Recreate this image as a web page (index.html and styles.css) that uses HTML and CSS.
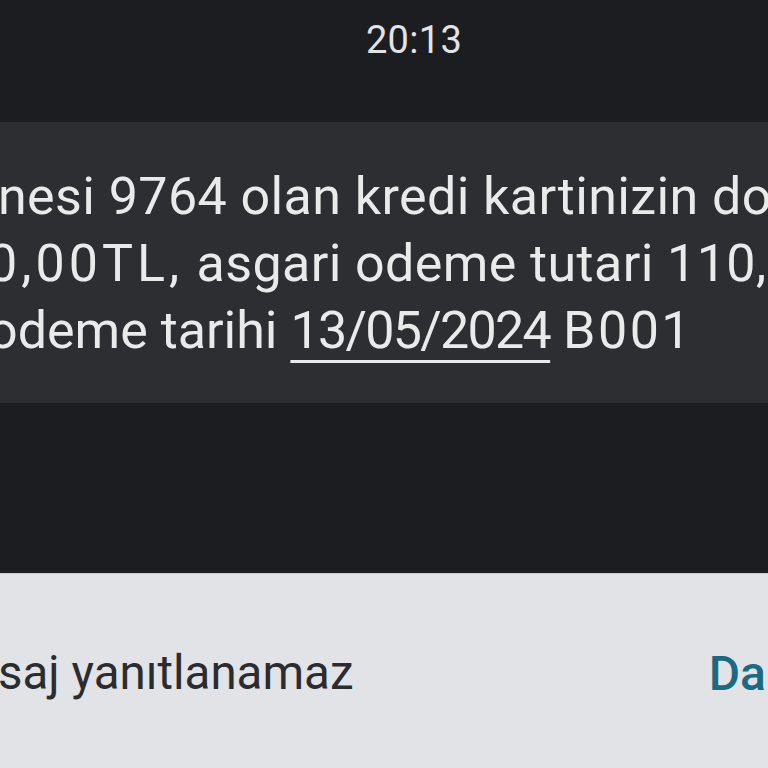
FILE: index.html
```html
<!DOCTYPE html>
<html>
<head>
<meta charset="utf-8">
<link rel="stylesheet" href="styles.css">
</head>
<body>
<div class="screen">
  <header class="time-row"><span class="time">20:13</span></header>
  <section class="bubble">
    <div class="line l1">nesi 9764 olan kredi kartinizin donem borcu</div>
    <div class="line l2"><span class="amount">0,00TL,</span> asgari odeme tutari 110,00TL son</div>
    <div class="line l3">odeme tarihi <span class="date">13/05/2024</span> <span class="code">B001</span></div>
  </section>
  <div class="gap"></div>
  <footer class="reply-bar">
    <span class="notice">saj yanıtlanamaz</span>
    <span class="action">Da</span>
  </footer>
</div>
</body>
</html>
```

FILE: styles.css
```css
html, body {
  margin: 0;
  padding: 0;
  background: #1b1d20;
}
.screen {
  width: 768px;
  height: 768px;
  overflow: hidden;
  display: flex;
  flex-direction: column;
  font-family: Roboto, "Noto Sans", sans-serif;
  background: #1b1d20;
}
.time-row {
  height: 122px;
  display: flex;
  justify-content: center;
  align-items: flex-start;
}
.time {
  margin-top: 14px;
  margin-left: 60px;
  font-size: 38px;
  line-height: 52px;
  color: #e3e3e3;
  font-weight: 400;
  letter-spacing: 0.3px;
}
.bubble {
  height: 281px;
  box-sizing: border-box;
  background: #2c2e31;
  overflow: hidden;
  display: flex;
  flex-direction: column;
  padding-top: 41px;
}
.line {
  white-space: nowrap;
  font-size: 52px;
  line-height: 67px;
  color: #eaeaea;
}
.l1 { margin-left: -2px; letter-spacing: 0.4px; }
.l2 { margin-left: -12px; letter-spacing: 0.4px; }
.l3 { margin-left: -12px; }
.amount { letter-spacing: 4px; }
.date {
  letter-spacing: -1.7px;
  text-decoration: underline;
  text-decoration-thickness: 3px;
  text-underline-offset: 12px;
}
.code { letter-spacing: 2.5px; }
.gap {
  height: 170px;
  background: #1b1d20;
}
.reply-bar {
  flex: 1;
  background: #e1e3e7;
  border-top: 1px solid #c9ccd1;
  display: flex;
  align-items: center;
  justify-content: space-between;
  padding-top: 4px;
}
.notice {
  font-size: 47.5px;
  color: #2a2c2f;
  margin-left: -2px;
  white-space: nowrap;
}
.action {
  font-size: 48px;
  font-weight: 500;
  color: #1b6a84;
  margin-right: 2px;
  white-space: nowrap;
}
```
